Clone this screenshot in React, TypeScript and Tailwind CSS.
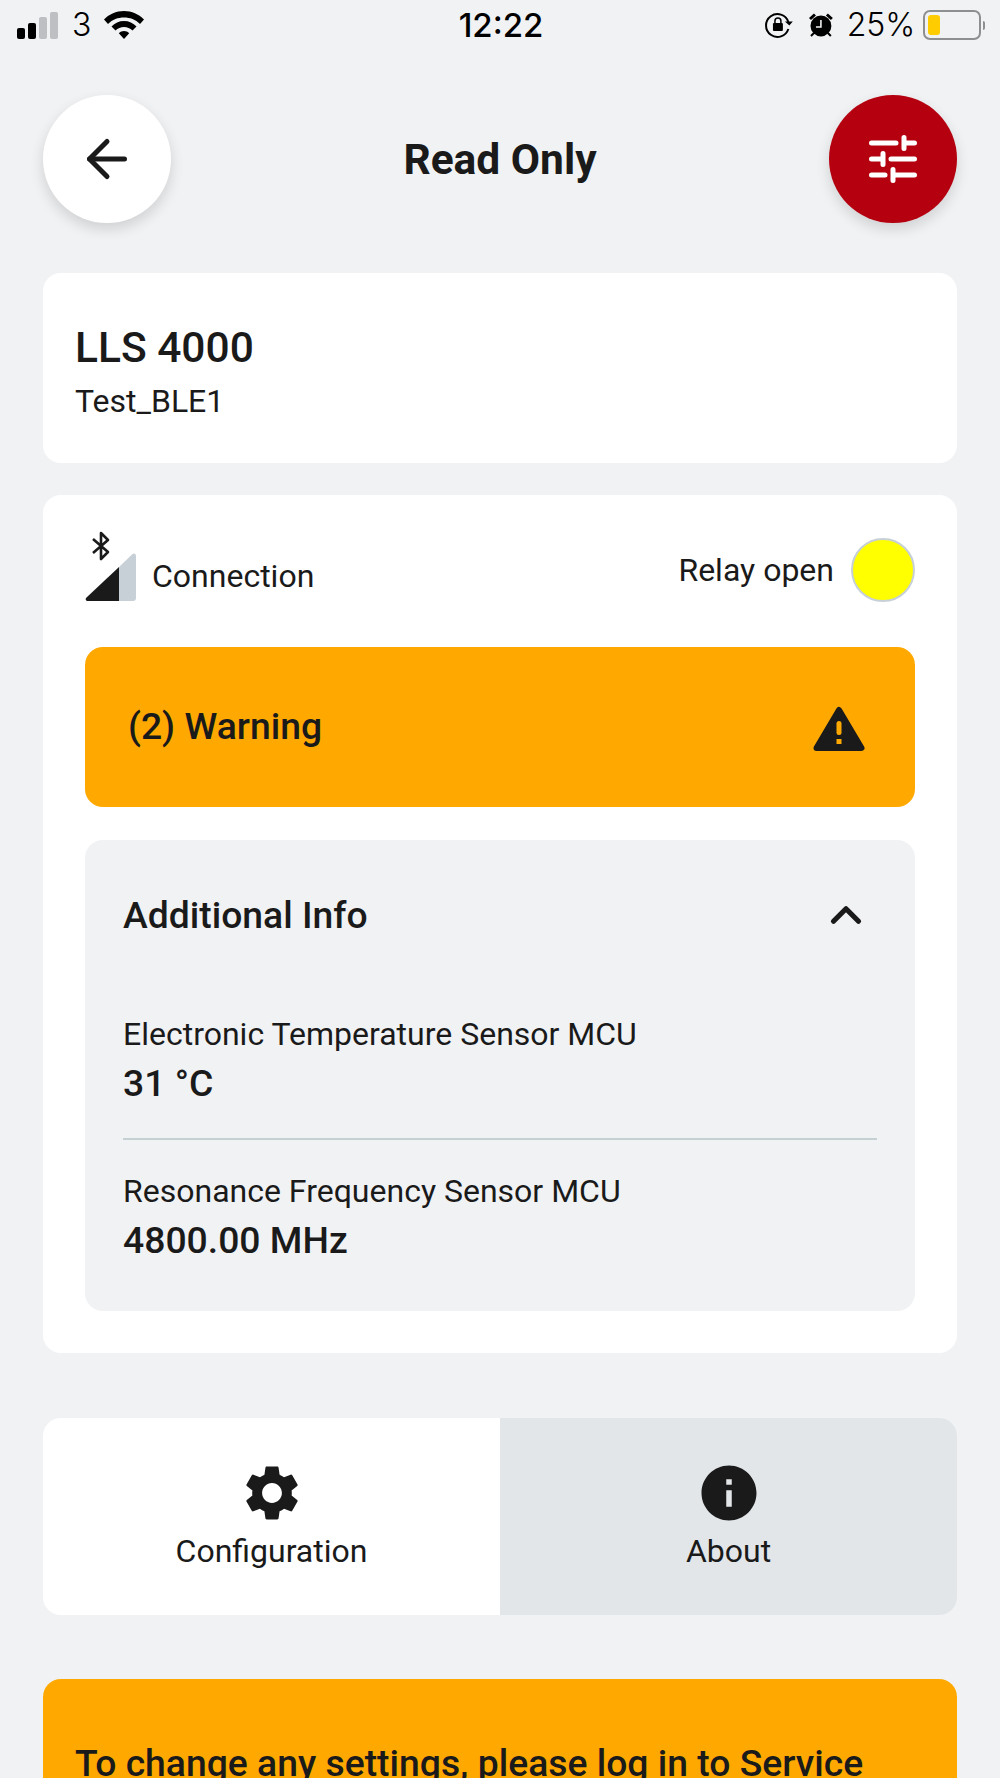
import { ArrowLeft, ChevronUp } from 'lucide-react';

function StatusBar() {
  return (
    <div className="flex h-[50px] items-center justify-between pl-[17px] pr-[15px] font-['Inter',sans-serif] text-black">
      <div className="flex w-[220px] items-center">
        <div className="flex items-end gap-[3px]">
          <div className="h-[11px] w-[8px] rounded-[2px] bg-black" />
          <div className="h-[16px] w-[8px] rounded-[2px] bg-black" />
          <div className="h-[22px] w-[8px] rounded-[2px] bg-[#bdbfc2]" />
          <div className="h-[27px] w-[8px] rounded-[2px] bg-[#bdbfc2]" />
        </div>
        <span className="ml-[14px] text-[32px] font-light leading-none">3</span>
        <svg viewBox="0 0 40 30" className="ml-[13px] h-[30px] w-[40px]" fill="currentColor">
          <path d="M20 1C12 1 5.500 4 0 9.500L4 14C8.500 9.500 14 7.500 20 7.500S31.500 9.500 36 14L40 9.500C34.500 4 28 1 20 1Z" />
          <path d="M20 11C15 11 10.800 13 7.500 16.500L11.500 20.500C13.800 18.300 16.800 17 20 17S26.200 18.300 28.500 20.500L32.500 16.500C29.200 13 25 11 20 11Z" />
          <path d="M20 21C18 21 16.200 21.800 14.800 23.200L20 29L25.200 23.200C23.800 21.800 22 21 20 21Z" />
        </svg>
      </div>
      <span className="text-[33px] font-medium leading-none">12:22</span>
      <div className="flex w-[220px] items-center justify-end">
        <svg viewBox="0 0 28 26" className="h-[26px] w-[28px]" fill="none" stroke="currentColor" strokeWidth="2">
          <path d="M23.500 10A11.500 11.500 0 1 0 23.500 17" />
          <path d="M20 9.500L24.500 13.500L28 9.500Z" fill="currentColor" stroke="none" />
          <rect x="8" y="11" width="10" height="8" rx="1" fill="currentColor" stroke="none" />
          <path d="M10 11V9A3 3 0 0 1 16 9V11" strokeWidth="1.500" />
        </svg>
        <svg viewBox="0 0 26 26" className="ml-[15px] h-[26px] w-[26px]" fill="currentColor">
          <circle cx="13" cy="14" r="10.500" />
          <path d="M1 6L6 1.500L8 3.500L3 8ZM25 6L20 1.500L18 3.500L23 8Z" />
          <path d="M3 24L6 21M23 24L20 21" stroke="currentColor" strokeWidth="2" />
          <path d="M13 8V15H8" fill="none" stroke="#f1f2f4" strokeWidth="1.600" />
        </svg>
        <span className="ml-[13px] text-[32px] font-light leading-none">25%</span>
        <div className="ml-[8px] flex h-[30px] w-[58px] items-center rounded-[7px] border-[2px] border-[#8e8f91] p-[3px]">
          <div className="h-[20px] w-[12px] rounded-[3px] bg-[#ffcc00]" />
        </div>
        <div className="ml-[2px] h-[9px] w-[2px] rounded-r-sm bg-[#8e8f91]" />
      </div>
    </div>
  );
}

function Header() {
  return (
    <div className="mt-[45px] flex items-center justify-between">
      <button className="flex h-[128px] w-[128px] items-center justify-center rounded-full bg-white shadow-[0_6px_14px_rgba(0,0,0,0.14)]">
        <ArrowLeft className="h-[60px] w-[60px] text-[#1a1a1a]" strokeWidth={2} />
      </button>
      <h1 className="mt-[2px] text-[42.500px] font-bold leading-none text-[#1a1a1a]">Read Only</h1>
      <button className="flex h-[128px] w-[128px] items-center justify-center rounded-full bg-[#b4000f] shadow-[0_6px_14px_rgba(0,0,0,0.14)]">
        <svg viewBox="0 0 48 48" className="h-[48px] w-[48px]" fill="none" stroke="white" strokeWidth="5" strokeLinecap="round">
          <path d="M2.500 8H27M35 8H45.500M35 2.500V13.500" />
          <path d="M2.500 24H14M22 24H45.500M14 18.500V29.500" />
          <path d="M2.500 40H16M24 40H45.500M24 34.500V45.500" />
        </svg>
      </button>
    </div>
  );
}

function ConnectionRow() {
  return (
    <div className="flex h-[71px] justify-between">
      <div className="flex items-end">
        <div className="relative h-[71px] w-[52px]">
          <svg viewBox="0 0 52 50" className="absolute bottom-0 left-0 h-[50px] w-[52px]">
            <path d="M34 15L47 2.500C49 .5 51 1.500 51 4V46C51 48 50 49 48 49H32Z" fill="#c8d0d7" />
            <path d="M34 15V49H3C.5 49 0 47 1.500 45.500Z" fill="#1a1a1a" />
          </svg>
          <svg viewBox="0 0 20 30" className="absolute left-[6px] top-0 h-[30px] w-[20px]" fill="none" stroke="#1a1a1a" strokeWidth="2.600" strokeLinejoin="round">
            <path d="M2 8L17 21L10 28V2L17 9L2 22" />
          </svg>
        </div>
        <span className="ml-[15px] pb-[10px] text-[32px] leading-none text-[#1a1a1a]">Connection</span>
      </div>
      <div className="flex items-center self-end">
        <span className="text-[32px] leading-none text-[#1a1a1a]">Relay open</span>
        <div className="ml-[17px] h-[64px] w-[64px] rounded-full border-[2px] border-[#c8d0d7] bg-[#ffff00]" />
      </div>
    </div>
  );
}

function WarningBar() {
  return (
    <div className="mt-[45px] flex h-[160px] items-center justify-between rounded-[18px] bg-[#ffa900] pl-[43px] pr-[50px]">
      <span className="text-[37.300px] font-medium leading-none text-[#1a1a1a]">(2) Warning</span>
      <svg viewBox="0 0 52 46" className="mt-[4px] h-[46px] w-[52px]">
        <path d="M26 4L48.500 42H3.500Z" fill="#1a1a1a" stroke="#1a1a1a" strokeWidth="6" strokeLinejoin="round" />
        <rect x="23.500" y="15" width="5" height="14" rx="2.500" fill="#ffa900" />
        <rect x="23.500" y="33" width="5" height="5" fill="#ffa900" />
      </svg>
    </div>
  );
}

function InfoItem({ label, value }: { label: string; value: string }) {
  return (
    <div>
      <p className="text-[32px] leading-[38px] text-[#1a1a1a]">{label}</p>
      <p className="mt-[7px] text-[37.300px] font-medium leading-[46px] text-[#1a1a1a]">{value}</p>
    </div>
  );
}

function AdditionalInfo() {
  return (
    <div className="mt-[33px] rounded-[18px] bg-[#f1f2f4] px-[38px] pb-[48px] pt-[50px]">
      <div className="flex items-center justify-between">
        <h2 className="text-[37.300px] font-medium leading-[46px] text-[#1a1a1a]">Additional Info</h2>
        <ChevronUp className="mr-[6px] h-[50px] w-[50px] text-[#1a1a1a]" strokeWidth={2.500} />
      </div>
      <div className="mt-[75px]">
        <InfoItem label="Electronic Temperature Sensor MCU" value="31 °C" />
      </div>
      <div className="mb-[32px] mt-[32px] h-[2px] bg-[#c5d0d3]" />
      <InfoItem label="Resonance Frequency Sensor MCU" value="4800.00 MHz" />
    </div>
  );
}

function Tabs() {
  return (
    <div className="mt-[65px] flex h-[197px] overflow-hidden rounded-[18px]">
      <div className="flex flex-1 flex-col items-center bg-white pt-[42px]">
        <svg viewBox="0 0 24 24" className="h-[66px] w-[66px]" fill="#1a1a1a">
          <path d="M19.140 12.940c.04-.3.060-.61.060-.94 0-.32-.020-.64-.070-.94l2.030-1.580c.18-.14.230-.41.120-.61l-1.920-3.320c-.12-.22-.37-.29-.59-.22l-2.390.96c-.5-.38-1.030-.7-1.620-.94l-.36-2.540c-.040-.24-.24-.41-.48-.41h-3.840c-.24 0-.43.170-.47.410l-.36 2.540c-.59.240-1.130.57-1.620.94l-2.390-.96c-.22-.080-.47 0-.59.220L2.740 8.870c-.12.210-.080.470.12.610l2.030 1.580c-.050.3-.090.630-.090.940s.020.640.070.940l-2.030 1.580c-.18.140-.23.410-.12.610l1.920 3.320c.12.220.37.290.59.220l2.390-.96c.5.380 1.030.7 1.620.94l.36 2.540c.050.240.24.410.48.410h3.840c.24 0 .44-.170.47-.410l.36-2.540c.59-.240 1.130-.56 1.620-.94l2.390.96c.22.080.47 0 .59-.220l1.920-3.320c.12-.22.070-.47-.12-.61l-2.010-1.580zM12 15.600c-1.980 0-3.600-1.620-3.600-3.600s1.620-3.600 3.600-3.600 3.600 1.620 3.600 3.600-1.620 3.600-3.600 3.600z" />
        </svg>
        <span className="mt-[6px] text-[32px] leading-[38px] text-[#1a1a1a]">Configuration</span>
      </div>
      <div className="flex flex-1 flex-col items-center bg-[#e3e6e9] pt-[42px]">
        <svg viewBox="0 0 24 24" className="h-[66px] w-[66px]" fill="#1a1a1a">
          <path d="M12 2C6.480 2 2 6.480 2 12s4.480 10 10 10 10-4.480 10-10S17.520 2 12 2zm1 15h-2v-6h2v6zm0-8h-2V7h2v2z" />
        </svg>
        <span className="mt-[6px] text-[32px] leading-[38px] text-[#1a1a1a]">About</span>
      </div>
    </div>
  );
}

export default function App() {
  return (
    <div className="h-[1778px] w-[1000px] overflow-hidden bg-[#f1f2f4] font-['Roboto',sans-serif]">
      <StatusBar />
      <div className="px-[43px]">
        <Header />
        <div className="mt-[50px] h-[190px] rounded-[18px] bg-white px-[32px] pt-[52px]">
          <p className="text-[42.500px] font-medium leading-[46px] text-[#1a1a1a]">LLS 4000</p>
          <p className="mt-[11px] text-[32px] leading-[38px] text-[#1a1a1a]">Test_BLE1</p>
        </div>
        <div className="mt-[32px] rounded-[18px] bg-white px-[42px] pb-[42px] pt-[36px]">
          <ConnectionRow />
          <WarningBar />
          <AdditionalInfo />
        </div>
        <Tabs />
        <div className="mt-[64px] h-[200px] rounded-t-[18px] bg-[#ffa900] px-[32px] pt-[61px]">
          <p className="whitespace-nowrap text-[37.300px] font-medium leading-[46px] text-[#1a1a1a]">To change any settings, please log in to Service</p>
        </div>
      </div>
    </div>
  );
}
